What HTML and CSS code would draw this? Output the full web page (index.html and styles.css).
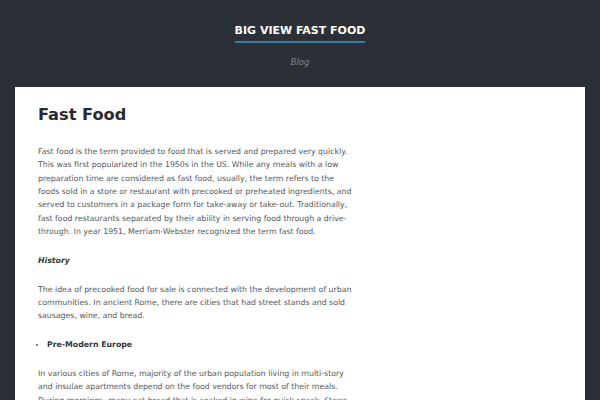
FILE: index.html
```html
<!DOCTYPE html>
<html lang="en">
<head>
<meta charset="utf-8">
<title>Big View Fast Food</title>
<link rel="stylesheet" href="styles.css">
</head>
<body>
<header class="site-header">
  <div class="site-title"><a href="#">BIG VIEW FAST FOOD</a></div>
  <div class="site-desc">Blog</div>
</header>
<main class="card">
  <h1 class="entry-title">Fast Food</h1>
  <div class="entry">
    <p>Fast food is the term provided to food that is served and prepared very quickly. This was first popularized in the 1950s in the US. While any meals with a low preparation time are considered as fast food, usually, the term refers to the foods sold in a store or restaurant with precooked or preheated ingredients, and served to customers in a package form for take-away or take-out. Traditionally, fast food restaurants separated by their ability in serving food through a drive-through. In year 1951, Merriam-Webster recognized the term fast food.</p>
    <p class="sub"><strong><em>History</em></strong></p>
    <p>The idea of precooked food for sale is connected with the development of urban communities. In ancient Rome, there are cities that had street stands and sold sausages, wine, and bread.</p>
    <ul>
      <li><strong>Pre-Modern Europe</strong></li>
    </ul>
    <p>In various cities of Rome, majority of the urban population living in multi-story and insulae apartments depend on the food vendors for most of their meals. During mornings, many eat bread that is soaked in wine for quick snack. Stews</p>
  </div>
</main>
</body>
</html>
```
FILE: styles.css
```css
html, body { margin: 0; padding: 0; }
body {
  background: #2b3036;
  font-family: "DejaVu Sans", sans-serif;
  overflow: hidden;
  height: 400px;
}
.site-header {
  display: flex;
  flex-direction: column;
  align-items: center;
  padding-top: 24px;
  height: 87px;
  box-sizing: border-box;
}
.site-title a {
  display: block;
  color: #ffffff;
  text-decoration: none;
  font-weight: bold;
  font-size: 11px;
  line-height: 14px;
  padding-bottom: 3px;
  border-bottom: 2px solid #3a7ea6;
}
.site-desc {
  margin-top: 14px;
  color: #7f858b;
  font-style: italic;
  font-weight: 200;
  font-size: 8.5px;
  line-height: 10px;
}
.card {
  display: block;
  margin: 0 15px;
  background: #ffffff;
  padding: 17px 23px 0 23px;
  height: 313px;
  overflow: hidden;
}
.entry-title {
  margin: 0;
  font-size: 16.2px;
  line-height: 22px;
  font-weight: bold;
  color: #272b30;
}
.entry {
  margin-top: 19px;
  width: 317px;
  color: #53585d;
  font-size: 7.8px;
  font-weight: 400;
  line-height: 13.33px;
}
.entry p { margin: 0 0 15.5px 0; }
.entry strong { font-weight: bold; color: #33373c; }
.entry ul { margin: 0 0 15.5px 0; padding-left: 9px; }
.entry li { list-style: disc; }
```
